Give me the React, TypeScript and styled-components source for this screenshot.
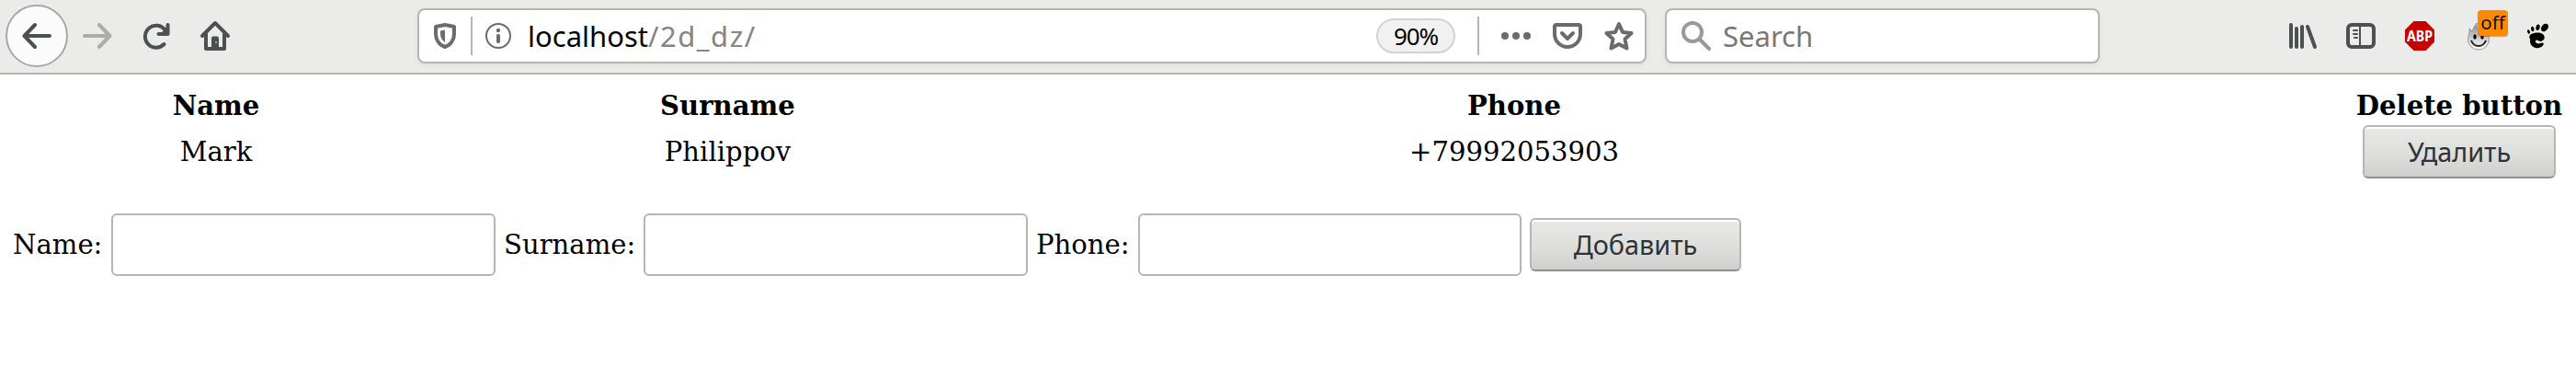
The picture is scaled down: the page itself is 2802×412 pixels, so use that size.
import React from 'react';
import styled, { createGlobalStyle, css } from 'styled-components';

const Global = createGlobalStyle`
  *, *::before, *::after { box-sizing: border-box; }
  html, body { margin: 0; background: #fff; }
  body { font: 29.1px/34px 'DejaVu Serif', serif; color: #000; }
`;

const Toolbar = styled.header`
  display: flex;
  align-items: center;
  height: 81px;
  padding: 0 26px 1px 6px;
  background: #ebebe9;
  border-bottom: 2px solid #b6b6b1;
  font-family: 'Noto Sans', sans-serif;
`;

const ToolButton = styled.div<{ $left?: number; $dim?: boolean }>`
  position: relative;
  display: flex;
  flex: none;
  width: 32px;
  margin-left: ${p => p.$left ?? 0}px;
  opacity: ${p => (p.$dim ? 0.4 : 1)};
  svg { display: block; overflow: visible; }
`;

const BackButton = styled.div`
  display: flex;
  flex: none;
  align-items: center;
  justify-content: center;
  width: 68px;
  height: 68px;
  border: 2px solid #a8a8a6;
  border-radius: 50%;
  background: #fbfbfb;
`;

const field = css`
  display: flex;
  flex: none;
  align-items: center;
  height: 60px;
  border: 2px solid #b6b6b1;
  border-radius: 8px;
  background: #fff;
  box-shadow: 0 2px 6px rgba(0, 0, 0, 0.06);
`;

const UrlBar = styled.div`
  ${field}
  width: 1337px;
  margin-left: 204px;
  padding: 0 12px 0 12px;
`;

const SearchBar = styled.div`
  ${field}
  width: 473px;
  margin-left: 20px;
  padding-left: 16px;
  color: #777;
`;

const Divider = styled.span<{ $left: number; $right: number }>`
  width: 2px;
  height: 42px;
  margin: 0 ${p => p.$right}px 0 ${p => p.$left}px;
  background: #b6b6b1;
`;

const FieldText = styled.span<{ $left: number; $spacing: number }>`
  margin-left: ${p => p.$left}px;
  font-size: 31px;
  line-height: 42px;
  letter-spacing: ${p => p.$spacing}px;
  white-space: nowrap;
`;

const Path = styled.span`
  color: #858585;
  letter-spacing: 1.5px;
`;

const Zoom = styled.span`
  width: 86px;
  height: 38px;
  margin-left: auto;
  border: 2px solid #d2d2d2;
  border-radius: 19px;
  background: #f1f1f1;
  font-size: 26px;
  line-height: 34px;
  letter-spacing: -1.2px;
  text-align: center;
`;

const Actions = styled.div`
  display: flex;
  align-items: center;
  gap: 24px;
`;

const Extensions = styled.nav`
  display: flex;
  align-items: center;
  gap: 32px;
  margin-left: auto;
`;

const OffBadge = styled.span`
  position: absolute;
  left: 15px;
  top: -12px;
  width: 33px;
  height: 28px;
  border-radius: 4px;
  background: #ff8a00;
  box-shadow: 0 1px 1px rgba(0, 0, 0, 0.3);
  color: #111;
  font-size: 20.5px;
  line-height: 26px;
  text-align: center;
`;

const Page = styled.main`
  padding: 14px 12px 0 14px;
`;

const Table = styled.table`
  width: 100%;
  table-layout: fixed;
  border-spacing: 0;
  text-align: center;
`;

const Col = styled.col<{ $w?: number }>`
  width: ${p => (p.$w ? `${p.$w}px` : 'auto')};
`;

const Head = styled.th`
  height: 41px;
  padding: 0 0 1px;
  white-space: nowrap;
`;

const Cell = styled.td`
  height: 58px;
  padding: 0;
`;

const Button = styled.button<{ $w: number }>`
  display: block;
  flex: none;
  width: ${p => p.$w}px;
  height: 58px;
  margin: 0 auto;
  padding: 0;
  border: 2px solid #b6b6b1;
  border-bottom-color: #91918c;
  border-radius: 6px;
  background: linear-gradient(#e8e8e6, #dededc 55%, #cfcfcd);
  box-shadow: inset 0 2px #fff;
  color: #2e3436;
  font: 28.8px/36px 'Noto Sans', sans-serif;
`;

const Form = styled.form`
  display: flex;
  align-items: center;
  margin-top: 38px;
`;

const Label = styled.label<{ $w: number }>`
  flex: none;
  width: ${p => p.$w}px;
  white-space: nowrap;
`;

const Input = styled.input<{ $w: number }>`
  flex: none;
  width: ${p => p.$w}px;
  height: 68px;
  margin: 0 9px 0 0;
  padding: 0 14px;
  border: 2px solid #b6b6b1;
  border-radius: 6px;
  background: #fff;
  font: inherit;
`;

const Icon = ({ children, size = 32, color = '#4b5152' }: { children: React.ReactNode; size?: number; color?: string }) => (
  <svg width={size} height={size} viewBox="0 0 32 32" fill="none" stroke={color} strokeWidth="4" strokeLinecap="round" strokeLinejoin="round">
    {children}
  </svg>
);

export default function App() {
  return (
    <>
      <Global />
      <Toolbar>
        <BackButton>
          <Icon><path d="M30 16H3M14 4L2.500 16L14 28" /></Icon>
        </BackButton>
        <ToolButton $left={16} $dim>
          <Icon><path d="M2 16h27M18 4l11.500 12L18 28" /></Icon>
        </ToolButton>
        <ToolButton $left={32}>
          <Icon><path d="M25.500 9.500A12 12 0 1 0 24.500 25M28.500 4v10H18.500" /><path d="M28 6v8h-8z" fill="#4b5152" stroke="none" /></Icon>
        </ToolButton>
        <ToolButton $left={32}>
          <Icon>
            <path d="M2 16L16 2L30 16M6 14v16h20V14" />
            <path d="M12 29V18.500a2 2 0 0 1 2-2h4a2 2 0 0 1 2 2V29z" fill="#4b5152" stroke="none" />
            <path d="M17 22.500v1" stroke="#ebebe9" strokeWidth="2" strokeLinecap="butt" />
          </Icon>
        </ToolButton>
        <UrlBar>
          <Icon color="#6b6b6b">
            <path d="M16 4L26 6v8c0 6-3.500 12-10 14C9.500 26 6 20 6 14V6z" />
            <path d="M16 9.500V23c-3-2-5-5-5-9v-3.500z" fill="#6b6b6b" stroke="none" />
          </Icon>
          <Divider $left={12} $right={14} />
          <svg width="28" height="28" viewBox="0 0 28 28" fill="#6b6b6b">
            <circle cx="14" cy="14" r="13" fill="none" stroke="#6b6b6b" strokeWidth="2" />
            <circle cx="14" cy="8" r="2.200" /><rect x="12" y="12" width="4" height="10" rx="1.800" />
          </svg>
          <FieldText $left={18} $spacing={0}>localhost<Path>/2d_dz/</Path></FieldText>
          <Zoom>90%</Zoom>
          <Divider $left={24} $right={24} />
          <Actions>
            <Icon color="#6b6b6b"><g fill="#6b6b6b" stroke="none"><circle cx="4" cy="16" r="4" /><circle cx="16" cy="16" r="4" /><circle cx="28" cy="16" r="4" /></g></Icon>
            <Icon color="#6b6b6b"><path d="M4 4H28a2 2 0 0 1 2 2v8a14 14 0 0 1-28 0V6a2 2 0 0 1 2-2zM10 13l6 6l6-6" /></Icon>
            <Icon color="#6b6b6b"><path d="M16 3l4 9 9.500 1-7 6.500 2 10L16 25l-8.500 4.500 2-10-7-6.500L12 12z" /></Icon>
          </Actions>
        </UrlBar>
        <SearchBar>
          <Icon color="#999"><circle cx="12" cy="12" r="10" /><path d="M20 20l10 10" /></Icon>
          <FieldText $left={13} $spacing={0}>Search</FieldText>
        </SearchBar>
        <Extensions>
          <ToolButton><Icon><path d="M4 4v24M10 8v20M16 6v22M22 6l8 22" /></Icon></ToolButton>
          <ToolButton><Icon><rect x="2" y="4" width="28" height="24" rx="4" /><path d="M15 4v24M8 10h4M8 14h4M9 18h3" strokeWidth="2" /></Icon></ToolButton>
          <ToolButton>
            <svg width="32" height="32" viewBox="0 0 32 32">
              <path d="M9.500 0h13L32 9.500v13L22.500 32h-13L0 22.500v-13z" fill="#c90000" />
              <text x="16" y="22" fill="#fff" fontSize="15.500" fontWeight="700" fontFamily="Noto Sans" textAnchor="middle" textLength="28" lengthAdjust="spacingAndGlyphs">ABP</text>
            </svg>
          </ToolButton>
          <ToolButton>
            <svg width="32" height="32" viewBox="0 0 32 32">
              <defs><linearGradient id="flame" x2="0" y2="1"><stop stopColor="#888" /><stop offset="1" stopColor="#fff" /></linearGradient></defs>
              <g transform="translate(4 0)">
                <path d="M10 2c-1 7 3 5 4 9C20 8 23.500 13 23.500 20a11.500 11 0 0 1-23 0c0-5 2-6 1.500-12l3 3c1-3 3-6 5-9z" fill="url(#flame)" stroke="#999" />
                <ellipse cx="8" cy="17" rx="1.700" ry="2.700" /><ellipse cx="16" cy="17" rx="1.700" ry="2.700" />
                <path d="M4 21c3 8 13 8 16 0" fill="none" stroke="#222" strokeWidth="2" />
              </g>
            </svg>
            <OffBadge>off</OffBadge>
          </ToolButton>
          <ToolButton>
            <svg width="32" height="32" viewBox="0 0 32 32">
              <ellipse cx="24" cy="7" rx="3.400" ry="4.800" transform="rotate(38 24 7)" />
              <ellipse cx="16.500" cy="6.800" rx="2.100" ry="3.300" transform="rotate(10 16.500 6.800)" /><ellipse cx="10.800" cy="8.500" rx="1.700" ry="2.800" transform="rotate(-8 10.800 8.500)" /><ellipse cx="6.500" cy="11.500" rx="1.400" ry="2.300" transform="rotate(-20 6.500 11.500)" />
              <path d="M17 12.500c7 0 9 7 4 9-4 1.500-4.500-2-6.500-.5s1.500 4.500 4.500 3 5 0 3 2.500c-4 5-13 3-14-4 0-2 1-2-.500-4C6 14 12 12.500 17 12.500z" />
            </svg>
          </ToolButton>
        </Extensions>
      </Toolbar>
      <Page>
        <Table>
          <colgroup><Col $w={442} /><Col $w={671} /><Col $w={1040} /><Col /><Col $w={230} /></colgroup>
          <thead><tr><Head>Name</Head><Head>Surname</Head><Head>Phone</Head><Head /><Head>Delete button</Head></tr></thead>
          <tbody><tr><Cell>Mark</Cell><Cell>Philippov</Cell><Cell>+79992053903</Cell><Cell /><Cell><Button $w={210} type="button">Удалить</Button></Cell></tr></tbody>
        </Table>
        <Form>
          <Label $w={107} htmlFor="name">Name:</Label><Input $w={418} id="name" />
          <Label $w={152} htmlFor="surname">Surname:</Label><Input $w={418} id="surname" />
          <Label $w={111} htmlFor="phone">Phone:</Label><Input $w={417} id="phone" />
          <div><Button $w={230} type="button">Добавить</Button></div>
        </Form>
      </Page>
    </>
  );
}
